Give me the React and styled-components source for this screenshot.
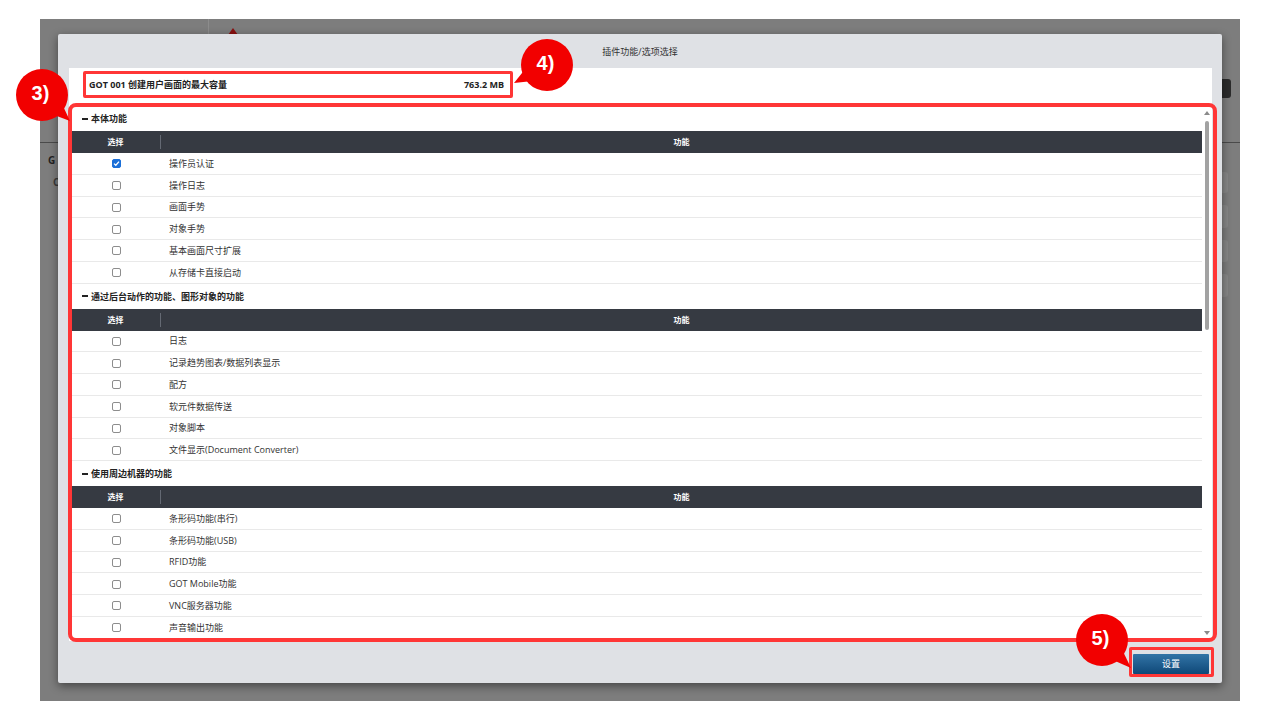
import React from "react";
import styled, { createGlobalStyle } from "styled-components";

const sections = [
  {
    title: "本体功能",
    items: [
      { name: "操作员认证", checked: true },
      { name: "操作日志" },
      { name: "画面手势" },
      { name: "对象手势" },
      { name: "基本画面尺寸扩展" },
      { name: "从存储卡直接启动" },
    ],
  },
  {
    title: "通过后台动作的功能、图形对象的功能",
    items: [
      { name: "日志" },
      { name: "记录趋势图表/数据列表显示" },
      { name: "配方" },
      { name: "软元件数据传送" },
      { name: "对象脚本" },
      { name: "文件显示(Document Converter)" },
    ],
  },
  {
    title: "使用周边机器的功能",
    items: [
      { name: "条形码功能(串行)" },
      { name: "条形码功能(USB)" },
      { name: "RFID功能" },
      { name: "GOT Mobile功能" },
      { name: "VNC服务器功能" },
      { name: "声音输出功能" },
    ],
  },
];

const callouts = [
  { label: "3)", cx: 42, cy: 95, tipX: 70, tipY: 121 },
  { label: "4)", cx: 547, cy: 65, tipX: 514, tipY: 83 },
  { label: "5)", cx: 1102, cy: 640, tipX: 1131, tipY: 668 },
];

const GlobalStyle = createGlobalStyle`
  html, body {
    margin: 0;
    padding: 0;
    background: #ffffff;
  }
  body {
    font-family: "Open Sans", "Noto Sans CJK SC", sans-serif;
    color: #222;
  }
`;

const Page = styled.div`
  position: relative;
  width: 1280px;
  height: 720px;
  padding: 19px 40px;
  box-sizing: border-box;
  overflow: hidden;
`;

const Screen = styled.div`
  position: relative;
  height: 682px;
  background: #7d7d7d;
  overflow: hidden;
`;

/* dimmed application page behind the dialog */
const Backdrop = styled.div`
  display: flex;
  flex-direction: column;
  height: 100%;
`;

const TopBar = styled.div`
  display: flex;
  justify-content: space-between;
  align-items: flex-start;
  height: 123px;
  border-bottom: 1px solid #4a4a4a;
`;

const TopCell = styled.div`
  width: 168px;
  height: 15px;
  border-right: 1px solid #8c8c8c;
`;

const Warn = styled.div`
  width: 0;
  height: 0;
  margin: 9px 0 0 19px;
  border-left: 5px solid transparent;
  border-right: 5px solid transparent;
  border-bottom: 7px solid #8a1010;
`;

const Spacer = styled.div`
  flex: 1;
`;

const DarkButton = styled.div`
  width: 40px;
  height: 19px;
  margin: 60px 9px 0 0;
  background: #2b2b2b;
  border-radius: 3px;
`;

const BackBody = styled.div`
  display: flex;
  justify-content: space-between;
  flex: 1;
`;

const BackSide = styled.div`
  display: flex;
  flex-direction: column;
  gap: 8px;
  padding: 10px 0 0 8px;
  font-size: 10px;
  font-weight: 700;
  color: #222;
`;

const BackLetter = styled.span`
  color: ${(p) => (p.dim ? "#3a3a3a" : "#222")};
  padding-left: ${(p) => (p.dim ? 5 : 0)}px;
`;

const BackTools = styled.div`
  display: flex;
  flex-direction: column;
  gap: 12px;
  padding: 29px 12px 0 0;
`;

const ToolBox = styled.div`
  width: 24px;
  height: ${(p) => p.h}px;
  background: #878787;
  border-radius: 3px;
  display: flex;
  justify-content: flex-end;
  align-items: center;
  padding-right: 3px;
  box-sizing: border-box;
  &::after {
    content: "";
    width: 4px;
    height: ${(p) => p.h - 10}px;
    border-left: 2px solid #3a3a3a;
  }
`;

/* dialog */
const Modal = styled.div`
  position: absolute;
  left: 18px;
  top: 15px;
  width: 1164px;
  height: 649px;
  background: #dfe1e5;
  border-radius: 2px;
  box-shadow: 0 3px 10px rgba(0, 0, 0, 0.45);
  display: flex;
  flex-direction: column;
`;

const TitleBar = styled.div`
  height: 34px;
  display: flex;
  align-items: center;
  justify-content: center;
  font-size: 9px;
  color: #333;
`;

const Panel = styled.div`
  margin: 0 10px 0 11px;
  height: 573px;
  background: #ffffff;
  display: flex;
  flex-direction: column;
`;

const Capacity = styled.div`
  width: 430px;
  height: 27px;
  margin: 3px 0 0 14px;
  padding: 0 6px 0 3px;
  box-sizing: border-box;
  border: 3.5px solid #ff3636;
  border-radius: 2px;
  display: flex;
  justify-content: space-between;
  align-items: center;
  font-size: 9px;
  font-weight: 700;
  color: #222;
`;

const List = styled.div`
  position: relative;
  display: flex;
  height: 534px;
  margin: 8px 0 0 2px;
`;

const Highlight = styled.div`
  position: absolute;
  inset: -3px -5px -2px -3px;
  border: 4px solid #ff3636;
  border-radius: 8px;
  pointer-events: none;
`;

const Content = styled.div`
  flex: 1;
  overflow: hidden;
`;

const SectionTitle = styled.div`
  height: 25px;
  display: flex;
  align-items: center;
  padding-left: 11px;
  font-size: 9px;
  font-weight: 700;
  color: #222;
`;

const Dash = styled.span`
  width: 6px;
  height: 2px;
  background: #222;
  margin-right: 3px;
`;

const Grid = styled.div`
  display: grid;
  grid-template-columns: 90px 1fr;
  align-items: center;
`;

const HeadRow = styled(Grid)`
  height: 22px;
  background: #363a42;
  color: #fff;
  font-size: 8px;
  font-weight: 700;
`;

const HeadCell = styled.div`
  text-align: center;
  line-height: 14px;
  border-right: ${(p) => (p.divider ? "1px solid #646973" : "none")};
`;

const Row = styled(Grid)`
  height: 21.75px;
  box-sizing: border-box;
  border-bottom: 1px solid #e9e9e9;
  font-size: 9px;
  color: #333;
`;

const CheckCell = styled.div`
  display: flex;
  justify-content: center;
  padding-top: 1px;
`;

const Box = styled.span`
  width: 9px;
  height: 9px;
  box-sizing: border-box;
  border-radius: 2px;
  border: 1px solid ${(p) => (p.checked ? "#1a6fd8" : "#8d8d8d")};
  background: ${(p) => (p.checked ? "#1a6fd8" : "#fff")};
  display: flex;
  align-items: center;
  justify-content: center;
`;

const NameCell = styled.div`
  padding-left: 8px;
`;

const Scrollbar = styled.div`
  width: 10px;
  display: flex;
  flex-direction: column;
  align-items: center;
  padding: 5px 0 5px;
  box-sizing: border-box;
`;

const Arrow = styled.span`
  width: 0;
  height: 0;
  border-left: 3px solid transparent;
  border-right: 3px solid transparent;
  ${(p) =>
    p.down
      ? "border-top: 4px solid #8a8a8a; margin-top: auto;"
      : "border-bottom: 4px solid #8a8a8a;"}
`;

const Thumb = styled.span`
  width: 4px;
  height: 209px;
  margin-top: 6px;
  background: #a2a2a2;
  border-radius: 2px;
`;

const Footer = styled.div`
  flex: 1;
  display: flex;
  justify-content: flex-end;
  align-items: flex-start;
  padding: 9px 13px 0 0;
`;

const ButtonWrap = styled.div`
  position: relative;
`;

const ButtonMark = styled.div`
  position: absolute;
  inset: -3px -5px -3px -4px;
  border: 3px solid #ff3636;
  border-radius: 2px;
  pointer-events: none;
`;

const SetButton = styled.button`
  width: 76px;
  height: 20px;
  border: none;
  border-radius: 1px;
  background: linear-gradient(#3274a6, #0f4878);
  color: #fff;
  font-family: "Noto Sans CJK SC", sans-serif;
  font-size: 9px;
  padding: 0;
`;

/* numbered annotation bubbles */
const Bubble = styled.div`
  position: absolute;
  left: ${(p) => p.x - 26}px;
  top: ${(p) => p.y - 26}px;
  width: 52px;
  height: 52px;
`;

const Disc = styled.div`
  position: absolute;
  inset: 0;
  border-radius: 50%;
  background: #f20000;
  display: flex;
  align-items: center;
  justify-content: center;
  color: #fff;
  font-family: "Liberation Sans", Arial, sans-serif;
  font-weight: 700;
  font-size: 20px;
  padding: 0 3px 4px 0;
  box-sizing: border-box;
`;

const TailSvg = styled.svg`
  position: absolute;
  left: 0;
  top: 0;
  overflow: visible;
`;

function Callout({ label, cx, cy, tipX, tipY }) {
  const dx = tipX - cx;
  const dy = tipY - cy;
  const len = Math.hypot(dx, dy);
  const ux = dx / len;
  const uy = dy / len;
  const px = -uy;
  const py = ux;
  const c = 26;
  const bx = c + ux * 16;
  const by = c + uy * 16;
  const w = 9;
  const pts = [
    [bx + px * w, by + py * w],
    [c + dx, c + dy],
    [bx - px * w, by - py * w],
  ]
    .map((p) => p.join(","))
    .join(" ");
  return (
    <Bubble x={cx} y={cy}>
      <TailSvg width="52" height="52">
        <polygon points={pts} fill="#f20000" />
      </TailSvg>
      <Disc>{label}</Disc>
    </Bubble>
  );
}

function CheckBox({ checked }) {
  return (
    <Box checked={checked}>
      {checked && (
        <svg width="7" height="7" viewBox="0 0 7 7">
          <path d="M1 3.6 L2.8 5.3 L6 1.6" fill="none" stroke="#fff" strokeWidth="1.3" />
        </svg>
      )}
    </Box>
  );
}

export default function App() {
  return (
    <Page>
      <GlobalStyle />
      <Screen>
        <Backdrop>
          <TopBar>
            <TopCell />
            <Warn />
            <Spacer />
            <DarkButton />
          </TopBar>
          <BackBody>
            <BackSide>
              <BackLetter>G</BackLetter>
              <BackLetter dim>C</BackLetter>
            </BackSide>
            <BackTools>
              <ToolBox h={21} />
              <ToolBox h={23} />
              <ToolBox h={22} />
              <ToolBox h={23} />
            </BackTools>
          </BackBody>
        </Backdrop>

        <Modal>
          <TitleBar>插件功能/选项选择</TitleBar>
          <Panel>
            <Capacity>
              <span>GOT 001 创建用户画面的最大容量</span>
              <span>763.2 MB</span>
            </Capacity>
            <List>
              <Content>
                {sections.map((sec) => (
                  <div key={sec.title}>
                    <SectionTitle>
                      <Dash />
                      {sec.title}
                    </SectionTitle>
                    <HeadRow>
                      <HeadCell divider>选择</HeadCell>
                      <HeadCell>功能</HeadCell>
                    </HeadRow>
                    {sec.items.map((item) => (
                      <Row key={item.name}>
                        <CheckCell>
                          <CheckBox checked={item.checked} />
                        </CheckCell>
                        <NameCell>{item.name}</NameCell>
                      </Row>
                    ))}
                  </div>
                ))}
              </Content>
              <Scrollbar>
                <Arrow />
                <Thumb />
                <Arrow down />
              </Scrollbar>
              <Highlight />
            </List>
          </Panel>
          <Footer>
            <ButtonWrap>
              <SetButton>设置</SetButton>
              <ButtonMark />
            </ButtonWrap>
          </Footer>
        </Modal>
      </Screen>

      {callouts.map((c) => (
        <Callout key={c.label} {...c} />
      ))}
    </Page>
  );
}
